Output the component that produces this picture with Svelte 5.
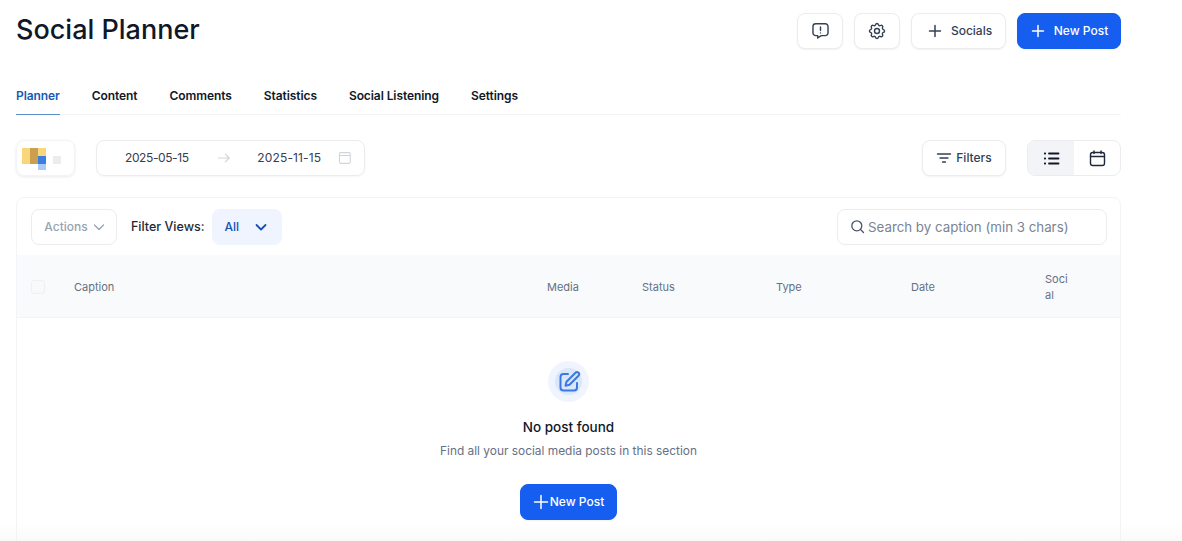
<script lang="ts">
	const tabs = ['Planner', 'Content', 'Comments', 'Statistics', 'Social Listening', 'Settings'];
	const columns = ['Media', 'Status', 'Type', 'Date'];
</script>

<div class="page">
	<header class="top">
		<h1>Social Planner</h1>
		<div class="top-actions">
			<button class="btn icon-btn" aria-label="Feedback">
				<svg width="19" height="19" viewBox="0 0 24 24" fill="none" stroke="#344054" stroke-width="1.8" stroke-linecap="round" stroke-linejoin="round">
					<path d="M7 18.5H6a3.5 3.5 0 0 1-3.5-3.5V7A3.5 3.5 0 0 1 6 3.5h12A3.5 3.5 0 0 1 21.500 7v8a3.500 3.500 0 0 1-3.500 3.500h-5l-4.500 3v-3z" />
					<path d="M12 7.500v4.500M12 15v.01" />
				</svg>
			</button>
			<button class="btn icon-btn" aria-label="Settings">
				<svg width="20" height="20" viewBox="0 0 24 24" fill="none" stroke="#344054" stroke-width="1.7" stroke-linecap="round" stroke-linejoin="round">
					<path d="M10.300 4.300c.4-1.800 3-1.800 3.400 0a1.700 1.700 0 0 0 2.600 1.100c1.500-.9 3.300.8 2.400 2.400a1.700 1.700 0 0 0 1 2.500c1.800.4 1.800 3 0 3.400a1.700 1.700 0 0 0-1 2.600c.9 1.500-.9 3.300-2.400 2.400a1.700 1.700 0 0 0-2.600 1c-.4 1.800-3 1.800-3.400 0a1.700 1.700 0 0 0-2.600-1c-1.500.9-3.300-.9-2.400-2.400a1.700 1.700 0 0 0-1-2.600c-1.800-.4-1.800-3 0-3.400a1.700 1.700 0 0 0 1-2.500c-.9-1.600.9-3.300 2.400-2.400 1 .6 2.300.1 2.600-1.100z" />
					<circle cx="12" cy="12" r="3" />
				</svg>
			</button>
			<button class="btn socials">
				<svg width="16" height="16" viewBox="0 0 16 16" fill="none" stroke="#344054" stroke-width="1.500" stroke-linecap="round"><path d="M8 2.500v11M2.500 8h11" /></svg>
				Socials
			</button>
			<button class="btn primary new-post">
				<svg width="16" height="16" viewBox="0 0 16 16" fill="none" stroke="#fff" stroke-width="1.500" stroke-linecap="round"><path d="M8 2.500v11M2.500 8h11" /></svg>
				New Post
			</button>
		</div>
	</header>

	<nav class="tabs">
		{#each tabs as tab, i}
			<span class="tab" class:active={i === 0}>{tab}</span>
		{/each}
	</nav>

	<div class="toolbar">
		<div class="brand">
			<span class="pixels" aria-hidden="true">
				<i class="px y1"></i>
				<i class="px y2"></i>
				<i class="px y3"></i>
				<i class="px b1"></i>
				<i class="px b2"></i>
				<i class="px g1"></i>
			</span>
		</div>
		<div class="dates">
			<span>2025-05-15</span>
			<svg class="arrow" width="16" height="16" viewBox="0 0 16 16" fill="none" stroke="#d0d5dd" stroke-width="1.200" stroke-linecap="round" stroke-linejoin="round"><path d="M2.500 8h11M9.500 4l4 4-4 4" /></svg>
			<span class="date-end">2025-11-15</span>
			<svg class="cal" width="14" height="14" viewBox="0 0 14 14" fill="none" stroke="#d0d5dd" stroke-width="1.100"><rect x="1.500" y="1.500" width="11" height="11" rx="1.500" /><path d="M1.500 4.500h11" /></svg>
		</div>
		<div class="spacer"></div>
		<button class="btn filters">
			<svg width="16" height="16" viewBox="0 0 16 16" fill="none" stroke="#344054" stroke-width="1.400" stroke-linecap="round"><path d="M1.500 4h13M4 8h8M6.500 12h3" /></svg>
			Filters
		</button>
		<div class="switch">
			<span class="seg on">
				<svg width="17" height="17" viewBox="0 0 17 17" fill="none" stroke="#101828" stroke-width="1.800" stroke-linecap="round"><path d="M6 3.500h9.500M6 8.500h9.500M6 13.500h9.500M1.800 3.500h.4M1.800 8.500h.4M1.800 13.500h.4" /></svg>
			</span>
			<span class="seg">
				<svg width="17" height="17" viewBox="0 0 17 17" fill="none" stroke="#1d2939" stroke-width="1.400" stroke-linecap="round"><rect x="1.500" y="2.500" width="14" height="13" rx="2.200" /><path d="M1.500 6.500h14M5 1v2.500M12 1v2.500" /></svg>
			</span>
		</div>
	</div>

	<section class="card">
		<div class="card-bar">
			<button class="btn actions">
				Actions
				<svg width="14" height="14" viewBox="0 0 14 14" fill="none" stroke="#98a2b3" stroke-width="1.300" stroke-linecap="round" stroke-linejoin="round"><path d="M2.500 5l4.500 4.500L11.500 5" /></svg>
			</button>
			<span class="fv-label">Filter Views:</span>
			<button class="fv-chip">
				All
				<svg width="14" height="14" viewBox="0 0 14 14" fill="none" stroke="#1551b5" stroke-width="1.800" stroke-linecap="round" stroke-linejoin="round"><path d="M2.500 5l4.500 4.500L11.500 5" /></svg>
			</button>
			<div class="spacer"></div>
			<label class="search">
				<svg width="15" height="15" viewBox="0 0 15 15" fill="none" stroke="#475467" stroke-width="1.300" stroke-linecap="round"><circle cx="6.800" cy="6.800" r="5" /><path d="M10.500 10.500l3 3" /></svg>
				<input placeholder="Search by caption (min 3 chars)" />
			</label>
		</div>

		<div class="thead">
			<span class="check"></span>
			<span class="th caption">Caption</span>
			{#each columns as col}
				<span class="th">{col}</span>
			{/each}
			<span class="th social">Soci<br />al</span>
		</div>

		<div class="empty">
			<div class="halo">
				<svg width="24" height="24" viewBox="0 0 24 24" fill="none" stroke="#3b78e0" stroke-width="2" stroke-linecap="round" stroke-linejoin="round">
					<path d="M11 4H6.500A3 3 0 0 0 3.500 7v10.500a3 3 0 0 0 3 3H17a3 3 0 0 0 3-3V13" />
					<path d="M18.500 2.800a2.100 2.100 0 0 1 3 3L12.500 14.800 8.500 15.800l1-4z" />
				</svg>
			</div>
			<h2>No post found</h2>
			<p>Find all your social media posts in this section</p>
			<button class="btn primary empty-btn">
				<svg width="16" height="16" viewBox="0 0 16 16" fill="none" stroke="#fff" stroke-width="1.500" stroke-linecap="round"><path d="M8 1.500v13M1.500 8h13" /></svg>
				New Post
			</button>
		</div>
	</section>
	<div class="fade"></div>
</div>

<style>
	:global(body) {
		margin: 0;
		background: #fff;
	}

	.page {
		position: relative;
		height: 541px;
		width: 1182px;
		box-sizing: border-box;
		padding: 13px 61px 0 16px;
		overflow: hidden;
		font-family: Inter, 'Liberation Sans', sans-serif;
		color: #101828;
	}

	.top {
		display: flex;
		align-items: center;
		justify-content: space-between;
		height: 36px;
	}

	h1 {
		margin: -3px 0 0;
		font-size: 27px;
		font-weight: 500;
		line-height: 33px;
		color: #101828;
	}

	.top-actions {
		display: flex;
		gap: 11px;
	}

	.btn {
		display: inline-flex;
		align-items: center;
		justify-content: center;
		box-sizing: border-box;
		height: 36px;
		padding: 0 0 1px;
		background: #fff;
		border: 1px solid #eaecf0;
		border-radius: 8px;
		font-family: inherit;
		font-size: 12px;
		font-weight: 500;
		color: #344054;
		box-shadow: 0 1px 2px rgba(16, 24, 40, 0.05);
	}

	.icon-btn {
		width: 46px;
	}

	.socials {
		width: 95px;
		gap: 8px;
		padding-left: 2px;
	}

	.primary {
		background: #155eef;
		border-color: #155eef;
		color: #fff;
	}

	.new-post {
		width: 104px;
		gap: 8px;
	}

	.tabs {
		display: flex;
		gap: 32px;
		margin-top: 33px;
		border-bottom: 1px solid #f2f4f7;
	}

	.tab {
		padding: 5px 0 9px;
		font-size: 12px;
		line-height: 18px;
		font-weight: 600;
		letter-spacing: -0.08px;
		color: #101828;
		border-bottom: 1px solid transparent;
		margin-bottom: -1px;
	}

	.tab.active {
		color: #155ab6;
		border-bottom-color: #5b8fc9;
	}

	.toolbar {
		display: flex;
		align-items: center;
		margin-top: 25px;
		height: 36px;
	}

	.spacer {
		flex: 1;
	}

	.brand {
		box-sizing: border-box;
		width: 59px;
		height: 36px;
		border: 1px solid #f2f4f7;
		border-radius: 8px;
		box-shadow: 0 1px 3px rgba(16, 24, 40, 0.09);
		display: flex;
		padding: 7px 0 0 5px;
	}

	.pixels {
		display: grid;
		grid-template-columns: repeat(3, 8px) 7px 8px;
		grid-template-rows: 8px 8px 6px;
		width: 46px;
		height: 30px;
	}

	.px {
		display: block;
	}

	.y1 {
		grid-area: 1 / 1 / 3 / 2;
		background: #fad67a;
	}

	.y2 {
		grid-area: 1 / 2 / 3 / 3;
		background: #c9a04f;
	}

	.y3 {
		grid-area: 1 / 3 / 2 / 4;
		background: #fad67a;
	}

	.b1 {
		grid-area: 2 / 3 / 3 / 4;
		background: #3b7ee0;
	}

	.b2 {
		grid-area: 3 / 3 / 4 / 4;
		background: #a9cbf5;
	}

	.g1 {
		grid-area: 2 / 5 / 3 / 6;
		background: #ececec;
	}

	.dates {
		box-sizing: border-box;
		width: 269px;
		height: 36px;
		margin-left: 21px;
		padding: 0 12px 1px 28px;
		display: flex;
		align-items: center;
		white-space: nowrap;
		border: 1px solid #eaecf0;
		border-radius: 8px;
		font-size: 12px;
		letter-spacing: -0.4px;
		color: #344054;
		box-shadow: 0 1px 2px rgba(16, 24, 40, 0.04);
	}

	.date-end {
		letter-spacing: 0.15px;
	}

	.arrow {
		margin: 0 26px 0 27px;
	}

	.cal {
		margin-left: 17px;
	}

	.filters {
		width: 84px;
		gap: 4px;
	}

	.switch {
		display: flex;
		box-sizing: border-box;
		width: 94px;
		height: 36px;
		margin-left: 21px;
		border: 1px solid #eaecf0;
		border-radius: 8px;
		overflow: hidden;
	}

	.seg {
		flex: 1;
		display: flex;
		align-items: center;
		justify-content: center;
	}

	.seg.on {
		background: #f2f4f7;
	}

	.card {
		margin-top: 21px;
		height: 400px;
		border: 1px solid #f2f4f7;
		border-radius: 8px 8px 0 0;
		box-sizing: border-box;
	}

	.card-bar {
		display: flex;
		align-items: center;
		height: 57px;
		padding: 0 13px 0 14px;
		box-sizing: border-box;
	}

	.actions {
		width: 86px;
		gap: 4px;
		padding: 0 0 0 2px;
		color: #98a2b3;
		box-shadow: none;
		border-color: #eaecf0;
	}

	.fv-label {
		margin-left: 14px;
		font-size: 12.5px;
		font-weight: 500;
		color: #1d2939;
	}

	.fv-chip {
		display: inline-flex;
		align-items: center;
		gap: 15px;
		box-sizing: border-box;
		width: 70px;
		height: 36px;
		margin-left: 7px;
		padding: 0 0 0 13px;
		background: #eff4ff;
		border: 0;
		border-radius: 8px;
		font-family: inherit;
		font-size: 12px;
		font-weight: 500;
		color: #1551b5;
	}

	.search {
		display: flex;
		align-items: center;
		gap: 3px;
		box-sizing: border-box;
		width: 270px;
		height: 36px;
		padding: 0 12px;
		border: 1px solid #eaecf0;
		border-radius: 8px;
	}

	input {
		flex: 1;
		min-width: 0;
		border: 0;
		outline: 0;
		padding: 0;
		font-family: inherit;
		font-size: 13.3px;
		background: transparent;
	}

	input::placeholder {
		color: #7a8494;
		opacity: 1;
	}

	.thead {
		display: grid;
		grid-template-columns: 43px 473px 95px 134px 135px 134px 1fr;
		align-items: center;
		height: 63px;
		padding: 1px 0 0 14px;
		background: #f8fafb;
		border-bottom: 1px solid #f2f4f7;
		box-sizing: border-box;
	}

	.check {
		box-sizing: border-box;
		width: 14px;
		height: 14px;
		border: 1px solid #eef0f3;
		border-radius: 3px;
		background: #f9f9fa;
	}

	.th {
		font-size: 11px;
		line-height: 16px;
		color: #667085;
	}

	.empty {
		display: flex;
		flex-direction: column;
		align-items: center;
		padding-top: 43px;
	}

	.halo {
		width: 41px;
		height: 41px;
		border-radius: 50%;
		background: radial-gradient(circle, #d9e6fc 0 13px, #eff4ff 14px);
		display: flex;
		align-items: center;
		justify-content: center;
	}

	h2 {
		margin: 15px 0 0;
		font-size: 13.5px;
		line-height: 20px;
		font-weight: 500;
		color: #101828;
	}

	p {
		margin: 5px 0 0;
		font-size: 11.9px;
		line-height: 18px;
		color: #667085;
	}

	.empty-btn {
		width: 97px;
		margin-top: 24px;
		gap: 1px;
	}

	.fade {
		position: absolute;
		left: 0;
		right: 0;
		bottom: 0;
		height: 18px;
		background: linear-gradient(to bottom, rgba(240, 240, 240, 0), rgba(240, 240, 240, 0.35));
		pointer-events: none;
	}
</style>
